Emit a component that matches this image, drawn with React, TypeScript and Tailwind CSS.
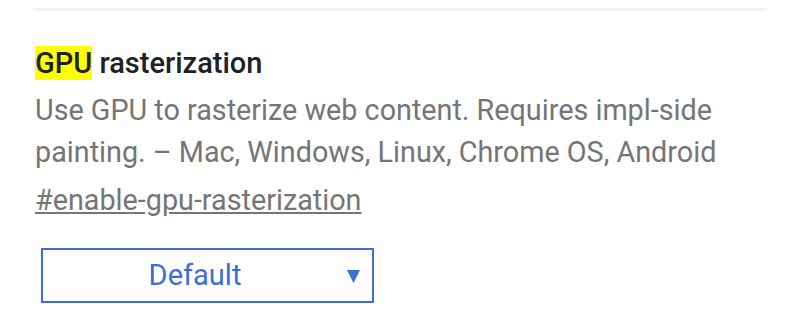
import React from "react";

const App = () => {
  return (
    <div className="w-[800px] h-[332px] bg-white overflow-hidden font-['Roboto',sans-serif]">
      <div className="pt-[8px] px-[35px]">
        <div className="h-[3px] bg-[#f2f2f2]" />
        <div className="pt-[35px]">
          <h2 className="text-[29px] leading-[34px] font-medium text-[#202124]">
            <span className="bg-[#ffff00]">GPU</span> rasterization
          </h2>
          <p className="mt-[9px] text-[28.75px] leading-[42px] text-[#757575]">
            Use GPU to rasterize web content. Requires impl-side painting. – Mac,
            Windows, Linux, Chrome OS, Android
          </p>
          <a className="mt-[6px] block text-[28.75px] leading-[42px] text-[#757575] underline">
            #enable-gpu-rasterization
          </a>
          <div className="mt-[27px] ml-[6px] w-[333px] h-[55px] border-2 border-[#3b6fd4] flex items-center pr-[12px]">
            <span className="flex-1 text-center text-[29px] text-[#3b6fd4]">
              Default
            </span>
            <svg width="13" height="13" viewBox="0 0 13 13" className="mt-[1px]">
              <polygon points="0,0 13,0 6.5,13" fill="#3b6fd4" />
            </svg>
          </div>
        </div>
      </div>
    </div>
  );
};

export default App;
